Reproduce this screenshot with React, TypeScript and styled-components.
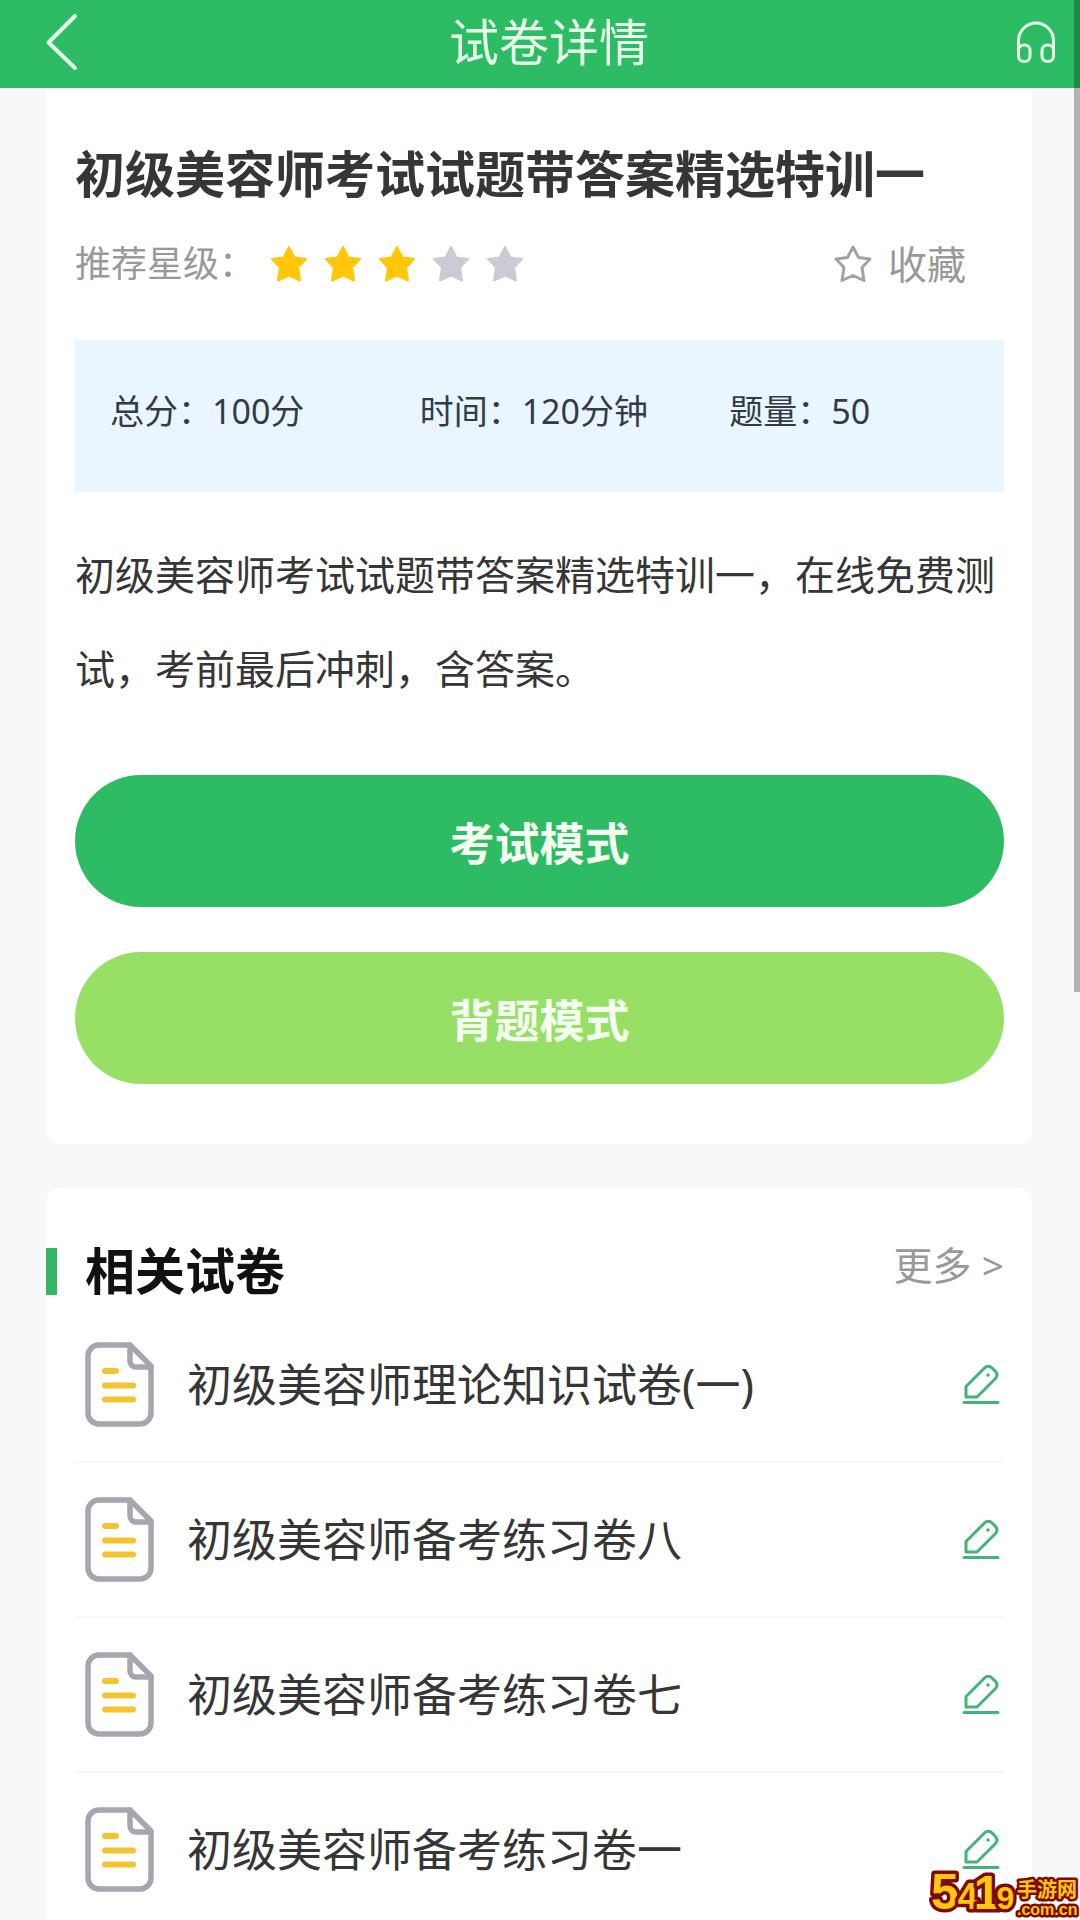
import React from "react";
import styled, { createGlobalStyle } from "styled-components";

const GlobalStyle = createGlobalStyle`
  *, *::before, *::after { box-sizing: border-box; }
  body {
    margin: 0;
    background: #f7f8f8;
    color: #363636;
    font-family: "Noto Sans", "Noto Sans CJK SC", sans-serif;
  }
  h1, h2, p, ul, dl, dd { margin: 0; padding: 0; }
  button { border: 0; padding: 0; background: none; font: inherit; color: inherit; cursor: pointer; }
  a { color: inherit; text-decoration: none; }
  svg { display: block; flex: none; }
`;

const Screen = styled.div`
  position: relative;
  display: flex;
  flex-direction: column;
  height: 100vh;
  overflow: hidden;
`;

const TopBar = styled.header`
  flex: none;
  display: flex;
  align-items: center;
  justify-content: space-between;
  height: 88px;
  padding: 0 24px 4px 44px;
  background: #2dbc64;
  color: #e6ffea;
`;

const BarTitle = styled.span`
  font-size: 50px;
  line-height: 64px;
`;

const Content = styled.main`
  flex: 1;
  min-height: 0;
  display: flex;
  flex-direction: column;
  gap: 44px;
  padding: 0 48px 0 46px;
  overflow-y: auto;
  scrollbar-width: none;
`;

const Card = styled.section<{ $first?: boolean }>`
  flex: none;
  padding: ${(p) => (p.$first ? "50px 28px 60px 29px" : "46px 28px 0 0")};
  background: #fff;
  border-radius: ${(p) => (p.$first ? "0 0 14px 14px" : "14px")};
`;

const PaperTitle = styled.h1`
  font-size: 50px;
  line-height: 72px;
  font-weight: 700;
`;

const MetaRow = styled.div`
  display: flex;
  align-items: center;
  justify-content: space-between;
  height: 56px;
  margin: 26px 0 48px;
  padding-right: 38px;
  color: #999;
`;

const Rating = styled.div`
  display: flex;
  align-items: center;
  gap: 15px;
  font-size: 36px;
  line-height: 56px;
`;

const Stars = styled.span`
  display: flex;
  gap: 16px;
`;

const Favorite = styled.button`
  display: flex;
  align-items: center;
  gap: 16px;
  font-size: 39px;
  line-height: 56px;
`;

const Facts = styled.dl`
  display: grid;
  grid-template-columns: repeat(3, 1fr);
  padding: 47px 0 57px;
  background: #eaf6ff;
  color: #333c44;
  font-size: 34px;
  line-height: 48px;
`;

const Fact = styled.div`
  display: flex;
  padding-left: 35px;
  white-space: nowrap;
`;

const Summary = styled.p`
  margin: 36px 0 59px;
  font-size: 40px;
  line-height: 94px;
`;

const Actions = styled.div`
  display: grid;
  gap: 45px;
`;

const ModeButton = styled.button<{ $color: string }>`
  height: 132px;
  padding-top: 6px;
  border-radius: 66px;
  background: ${(p) => p.$color};
  color: #f4fff2;
  font-size: 45px;
  line-height: 64px;
  font-weight: 700;
`;

const SectionHead = styled.div`
  display: flex;
  align-items: center;
  justify-content: space-between;
  height: 74px;
`;

const SectionTitle = styled.h2`
  display: flex;
  align-items: center;
  gap: 28px;
  color: #111;
  font-size: 50px;
  line-height: 72px;
  font-weight: 700;

  &::before {
    content: "";
    width: 11px;
    height: 47px;
    background: #36b768;
  }
`;

const MoreLink = styled.a`
  padding-bottom: 12px;
  color: #999;
  font-size: 39px;
  line-height: 56px;
`;

const PaperList = styled.ul`
  padding-left: 29px;
  list-style: none;
`;

const PaperItem = styled.li`
  border-bottom: 2px solid #f6f6f6;
`;

const PaperLink = styled.a`
  display: flex;
  align-items: center;
  height: 153px;
  padding: 0 4px 0 10px;
  font-size: 45px;
  line-height: 64px;
`;

const PaperName = styled.span`
  flex: 1;
  padding-left: 33px;
`;

const ScrollThumb = styled.div`
  position: absolute;
  top: 0;
  right: 0;
  width: 6px;
  height: 992px;
  background: rgba(0, 0, 0, 0.28);
`;

const SiteMark = styled.svg`
  position: absolute;
  right: 0;
  bottom: 0;
  overflow: visible;
  fill: #ffc80a;
  stroke: #7d0a05;
  stroke-width: 7px;
  stroke-linejoin: round;
  paint-order: stroke;
  font-family: "Liberation Sans", "Noto Sans CJK SC", sans-serif;
  font-weight: 700;
`;

const STAR = "M19 2 24.5 12.5 36 14 28 22.5 30 35.5 19 30.5 8 35.5 10 22.5 2 14 13.5 12.5Z";

const Star = ({ color, outline }: { color: string; outline?: boolean }) => (
  <svg width="38" height="38" viewBox="0 0 38 38" aria-hidden="true">
    <path
      d={STAR}
      fill={outline ? "none" : color}
      stroke={color}
      strokeWidth={outline ? 3 : 2}
      strokeLinejoin="round"
    />
  </svg>
);

const BackIcon = () => (
  <svg width="38" height="58" viewBox="0 0 38 58" aria-hidden="true">
    <path d="M31 3 4.500 29.500 31 55" fill="none" stroke="currentColor" strokeWidth="4" strokeLinecap="round" strokeLinejoin="round" />
  </svg>
);

const HeadphonesIcon = () => (
  <svg width="40" height="42" viewBox="0 0 40 42" fill="none" stroke="currentColor" strokeWidth="3" aria-hidden="true">
    <path d="M2.500 32V20a17.500 18 0 0 1 35 0v12" />
    <rect x="2.500" y="24" width="11.500" height="16.500" rx="5.500" />
    <rect x="26" y="24" width="11.500" height="16.500" rx="5.500" />
  </svg>
);

const DocIcon = () => (
  <svg width="69" height="85" viewBox="0 0 69 85" fill="none" strokeLinejoin="round" strokeLinecap="round" aria-hidden="true">
    <g stroke="#a6a5b0" strokeWidth="5.500">
      <path d="M45 3H14A11 11 0 0 0 3 14v57a11 11 0 0 0 11 11h41a11 11 0 0 0 11-11V24Z" />
      <path d="M45 3v16a6 6 0 0 0 6 6h15" />
    </g>
    <path d="M20 29h11M20 43.500h28M20 57.500h28" stroke="#f4c430" strokeWidth="6" />
  </svg>
);

const PencilIcon = () => (
  <svg width="38" height="40" viewBox="0 0 38 40" fill="none" stroke="#43b377" strokeWidth="3" strokeLinejoin="round" strokeLinecap="round" aria-hidden="true">
    <path d="M4 21.500 22.500 3q4-3.500 7.500 0l3.500 3.500q3 3.500 0 7L15 32H4Z" />
    <path d="M2 37.500h34" />
    <circle cx="26" cy="10" r="1.800" fill="#43b377" stroke="none" />
  </svg>
);

const facts = [
  { label: "总分", value: "100分" },
  { label: "时间", value: "120分钟" },
  { label: "题量", value: "50" },
];

const papers = [
  "初级美容师理论知识试卷(一)",
  "初级美容师备考练习卷八",
  "初级美容师备考练习卷七",
  "初级美容师备考练习卷一",
];

const SCORE = 3;

export default function App() {
  return (
    <>
      <GlobalStyle />
      <Screen>
        <TopBar>
          <button type="button" aria-label="返回"><BackIcon /></button>
          <BarTitle>试卷详情</BarTitle>
          <button type="button" aria-label="客服"><HeadphonesIcon /></button>
        </TopBar>

        <Content>
          <Card $first>
            <PaperTitle>初级美容师考试试题带答案精选特训一</PaperTitle>
            <MetaRow>
              <Rating>
                推荐星级：
                <Stars>
                  {[1, 2, 3, 4, 5].map((n) => (
                    <Star key={n} color={n <= SCORE ? "#ffc708" : "#cbcbd5"} />
                  ))}
                </Stars>
              </Rating>
              <Favorite type="button">
                <Star color="#a3a3a3" outline />
                收藏
              </Favorite>
            </MetaRow>

            <Facts>
              {facts.map((f) => (
                <Fact key={f.label}>
                  <dt>{f.label}：</dt>
                  <dd>{f.value}</dd>
                </Fact>
              ))}
            </Facts>

            <Summary>初级美容师考试试题带答案精选特训一，在线免费测试，考前最后冲刺，含答案。</Summary>

            <Actions>
              <ModeButton type="button" $color="#2dbc64">考试模式</ModeButton>
              <ModeButton type="button" $color="#98df66">背题模式</ModeButton>
            </Actions>
          </Card>

          <Card>
            <SectionHead>
              <SectionTitle>相关试卷</SectionTitle>
              <MoreLink href="#more">更多 &gt;</MoreLink>
            </SectionHead>
            <PaperList>
              {papers.map((name) => (
                <PaperItem key={name}>
                  <PaperLink href="#paper">
                    <DocIcon />
                    <PaperName>{name}</PaperName>
                    <PencilIcon />
                  </PaperLink>
                </PaperItem>
              ))}
            </PaperList>
          </Card>
        </Content>

        <ScrollThumb aria-hidden="true" />
        <SiteMark width="152" height="60" viewBox="0 0 152 60">
          <text x="3" y="49">
            <tspan fontSize="50">5</tspan>
            <tspan fontSize="36" dx="-1">4</tspan>
            <tspan fontSize="48" dx="-4">1</tspan>
            <tspan fontSize="32" dx="-4">9</tspan>
          </text>
          <text x="89" y="37" fontSize="20" strokeWidth="5">手游网</text>
          <text x="89" y="55" fontSize="16" strokeWidth="5">.com.cn</text>
        </SiteMark>
      </Screen>
    </>
  );
}
